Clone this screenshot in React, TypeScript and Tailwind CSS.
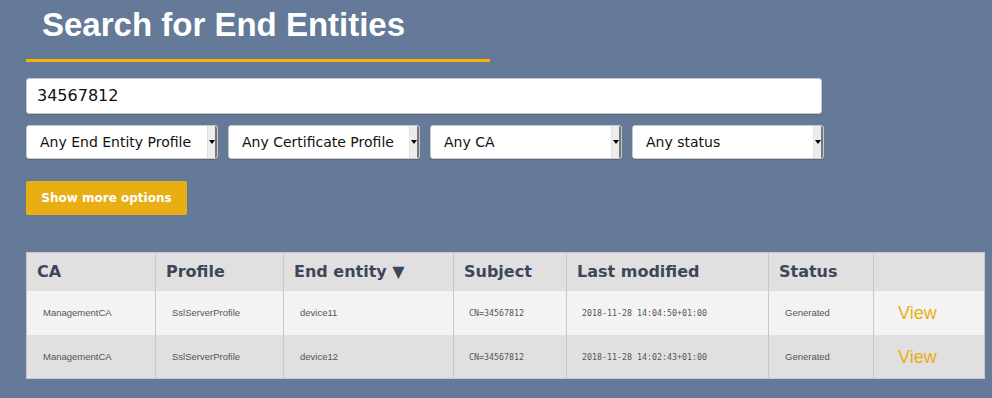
import React from "react";

const ROWS = [
  { ca: "ManagementCA", profile: "SslServerProfile", ee: "device11", subject: "CN=34567812", modified: "2018-11-28 14:04:50+01:00", status: "Generated" },
  { ca: "ManagementCA", profile: "SslServerProfile", ee: "device12", subject: "CN=34567812", modified: "2018-11-28 14:02:43+01:00", status: "Generated" },
];

function Select({ label }: { label: string }) {
  return (
    <div className="flex h-[34px] w-[192px] items-stretch overflow-hidden rounded-[3px] border border-[#c8c8c8] bg-white shadow-[0_1px_1px_rgba(0,0,0,0.15)]">
      <span className="flex flex-1 items-center pl-[13px] text-[14px] text-[#111]">{label}</span>
      <span className="flex w-[10px] items-center justify-center border-l border-[#e0e0e0] border-r-2 border-r-[#777] bg-[#ececec]">
        <span className="h-0 w-0 border-x-[3px] border-t-[4px] border-x-transparent border-t-black" />
      </span>
    </div>
  );
}

export default function App() {
  return (
    <div className="h-[398px] w-[992px] overflow-hidden bg-[#647a98] font-['DejaVu_Sans',sans-serif]">
      <div className="px-[26px]">
        <div className="w-[464px] border-b-[3px] border-[#f5b200] pt-[5px] pb-[14px] pl-[16px]">
          <h1 className="font-['Liberation_Sans',Arial,sans-serif] text-[33px] font-bold leading-[40px] text-white">
            Search for End Entities
          </h1>
        </div>

        <div className="mt-[16px] flex h-[36px] w-[796px] items-center rounded-[3px] border border-[#c8c8c8] bg-white pl-[10px] text-[16px] text-[#111] shadow-[0_1px_1px_rgba(0,0,0,0.15)]">
          34567812
        </div>

        <div className="mt-[11px] flex gap-[10px]">
          <Select label="Any End Entity Profile" />
          <Select label="Any Certificate Profile" />
          <Select label="Any CA" />
          <Select label="Any status" />
        </div>

        <button className="mt-[22px] flex h-[34px] w-[161px] items-center justify-center rounded-[2px] bg-[#e8ae14] text-[12px] font-bold text-white">
          Show more options
        </button>

        <table className="mt-[37px] w-[959px] border-collapse border border-[#c8c8c8]">
          <thead>
            <tr className="h-[38px] bg-[#e0e0e0] text-left text-[16px] font-bold text-[#3c4758]">
              <th className="w-[129px] border-r border-[#c8c8c8] pl-[10px] pt-[1px]">CA</th>
              <th className="w-[128px] border-r border-[#c8c8c8] pl-[10px] pt-[1px]">Profile</th>
              <th className="w-[170px] border-r border-[#c8c8c8] pl-[10px] pt-[1px]">End entity ▼</th>
              <th className="w-[113px] border-r border-[#c8c8c8] pl-[10px] pt-[1px]">Subject</th>
              <th className="w-[202px] border-r border-[#c8c8c8] pl-[10px] pt-[1px]">Last modified</th>
              <th className="w-[105px] border-r border-[#c8c8c8] pl-[10px] pt-[1px]">Status</th>
              <th />
            </tr>
          </thead>
          <tbody>
            {ROWS.map((r, i) => (
              <tr key={r.ee} className={i % 2 === 0 ? "h-[44px] bg-[#f3f3f3]" : "h-[44px] bg-[#e0e0e0]"}>
                <td className="border-r border-[#c8c8c8] pl-[16px] pt-[2px] font-['Liberation_Sans',Arial,sans-serif] text-[9.5px] text-[#555]">{r.ca}</td>
                <td className="border-r border-[#c8c8c8] pl-[16px] pt-[2px] font-['Liberation_Sans',Arial,sans-serif] text-[9.5px] text-[#555]">{r.profile}</td>
                <td className="border-r border-[#c8c8c8] pl-[16px] pt-[2px] font-['Liberation_Sans',Arial,sans-serif] text-[9.5px] text-[#555]">{r.ee}</td>
                <td className="border-r border-[#c8c8c8] pl-[15px] pt-[2px] font-['DejaVu_Sans_Mono',monospace] text-[8.3px] text-[#555]">{r.subject}</td>
                <td className="border-r border-[#c8c8c8] pl-[15px] pt-[2px] font-['DejaVu_Sans_Mono',monospace] text-[8.3px] text-[#555]">{r.modified}</td>
                <td className="border-r border-[#c8c8c8] pl-[16px] pt-[2px] font-['Liberation_Sans',Arial,sans-serif] text-[9.5px] text-[#555]">{r.status}</td>
                <td className="pl-[24px] pt-[2px] font-['Liberation_Sans',Arial,sans-serif] text-[18px] text-[#e8ae14]">View</td>
              </tr>
            ))}
          </tbody>
        </table>
      </div>
    </div>
  );
}
